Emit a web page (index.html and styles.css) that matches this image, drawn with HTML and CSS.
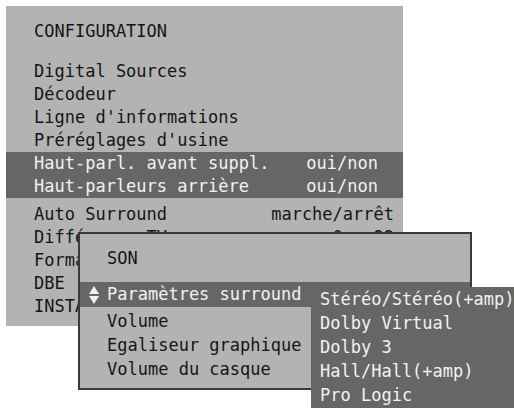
FILE: index.html
```html
<!DOCTYPE html>
<html lang="fr">
<head>
  <meta charset="UTF-8" />
  <meta name="viewport" content="width=device-width, initial-scale=1.0" />
  <title>Configuration</title>
  <link rel="stylesheet" href="styles.css">
</head>
<body>

  <div class="screen">

    <div class="config">
      <div class="title">CONFIGURATION</div>

      <div class="group">
        <div class="row">Digital Sources</div>
        <div class="row">Décodeur</div>
        <div class="row">Ligne d'informations</div>
        <div class="row">Préréglages d'usine</div>
      </div>

      <div class="group dark">
        <div class="row"><span>Haut-parl. avant suppl.</span><span class="val short">oui/non</span></div>
        <div class="row"><span>Haut-parleurs arrière</span><span class="val short">oui/non</span></div>
      </div>

      <div class="group after">
        <div class="row"><span>Auto Surround</span><span class="val">marche/arrêt</span></div>
        <div class="row"><span>Différence TV</span><span class="val">0 - 99</span></div>
        <div class="row">Format</div>
        <div class="row">DBE</div>
        <div class="row">INSTALLATION</div>
      </div>
    </div>

    <!-- menu SON -->
    <div class="popup">
      <div class="popup-title">SON</div>
      <div class="item active">
        <svg class="arrows" width="10" height="18" viewBox="0 0 10 18">
          <polygon points="5,0 10,8 0,8" fill="#f2f2f2" />
          <polygon points="0,10 10,10 5,18" fill="#f2f2f2" />
        </svg>
        <span>Paramètres surround</span>
      </div>
      <div class="items">
        <div class="item">Volume</div>
        <div class="item">Egaliseur graphique</div>
        <div class="item">Volume du casque</div>
      </div>
    </div>

    <div class="submenu">
      <div>Stéréo/Stéréo(+amp)</div>
      <div>Dolby Virtual</div>
      <div>Dolby 3</div>
      <div>Hall/Hall(+amp)</div>
      <div>Pro Logic</div>
    </div>

  </div>

</body>
</html>
```

FILE: styles.css
```css
body {
  margin: 0;
  background: #fff;
  font-family: "DejaVu Sans Mono", "Liberation Mono", monospace;
  font-size: 17px;
  color: #151515;
}

.screen {
  position: relative;
  width: 514px;
  height: 409px;
  overflow: hidden;
}

.config {
  margin: 6px 0 0 6px;
  width: 397px;
  height: 320px;
  box-sizing: border-box;
  padding-top: 14px;
  background: #b3b3b3;
}

.title {
  padding-left: 28px;
  line-height: 23px;
  margin-bottom: 17px;
}

.row {
  display: flex;
  justify-content: space-between;
  padding: 0 9px 0 28px;
  line-height: 23px;
  white-space: pre;
}

.val.short {
  margin-right: 16px;
}

.dark {
  background: #666;
  color: #f2f2f2;
}

.after {
  margin-top: 5px;
}

.popup {
  position: absolute;
  left: 78px;
  top: 232px;
  width: 394px;
  height: 158px;
  box-sizing: border-box;
  border: 2px solid #3a3a3a;
  background: #b3b3b3;
  padding-top: 13px;
}

.popup-title {
  padding-left: 27px;
  line-height: 23px;
  margin-bottom: 12px;
}

.item {
  padding-left: 27px;
  line-height: 24px;
  white-space: nowrap;
}

.item.active {
  display: flex;
  align-items: center;
  gap: 8px;
  padding-left: 9px;
  line-height: 25px;
  background: #666;
  color: #f2f2f2;
}

.items {
  margin-top: 2px;
}

.submenu {
  position: absolute;
  left: 311px;
  top: 287px;
  width: 203px;
  height: 121px;
  box-sizing: border-box;
  padding-left: 9px;
  background: #666;
  color: #f2f2f2;
  line-height: 24px;
  white-space: nowrap;
}
```
